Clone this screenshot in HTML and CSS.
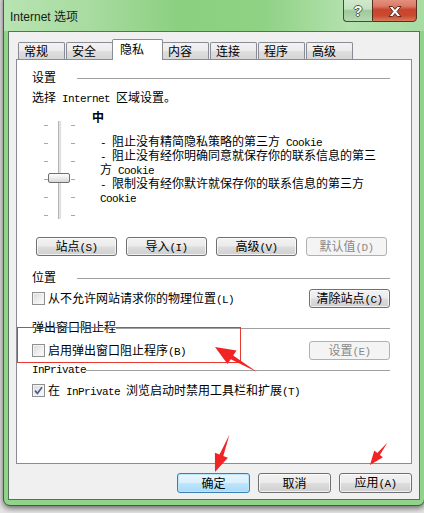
FILE: index.html
```html
<!DOCTYPE html>
<html lang="zh-CN">
<head>
  <meta charset="UTF-8">
  <meta name="viewport" content="width=device-width, initial-scale=1.0">
  <title>Internet 选项</title>
  <link rel="stylesheet" href="styles.css">
</head>
<body>
  <div class="window">
    <div class="titlebar">
      <div class="title">Internet 选项</div>
      <div class="caption-buttons">
        <div class="cap-btn help"><span>?</span></div>
        <div class="cap-btn close">
          <svg width="14" height="11" viewBox="0 0 14 11">
            <path d="M1 0.5H4.5L7 3.4L9.5 0.5H13L9 5.5L13 10.5H9.5L7 7.6L4.5 10.5H1L5 5.5Z" fill="#fff" stroke="#4a2218" stroke-width="0.9" stroke-linejoin="round"/>
          </svg>
        </div>
      </div>
    </div>

    <div class="client">
      <div class="tabs">
        <div class="tab">常规</div>
        <div class="tab">安全</div>
        <div class="tab active">隐私</div>
        <div class="tab">内容</div>
        <div class="tab">连接</div>
        <div class="tab">程序</div>
        <div class="tab">高级</div>
      </div>

      <div class="panel">
        <div class="group-head">
          <span class="group-label">设置</span>
          <span class="group-line"></span>
        </div>
        <div class="zone-text">选择<span class="en"> Internet </span>区域设置。</div>

        <div class="privacy">
          <div class="slider">
            <div class="ticks"><i></i><i></i><i></i><i></i><i></i><i></i></div>
            <div class="track"></div>
            <div class="ticks"><i></i><i></i><i></i><i></i><i></i><i></i></div>
            <div class="thumb"></div>
          </div>
          <div class="level">
            <div class="level-name">中</div>
            <ul class="level-list">
              <li><span class="en">- </span>阻止没有精简隐私策略的第三方<span class="en"> Cookie</span></li>
              <li><span class="en">- </span>阻止没有经你明确同意就保存你的联系信息的第三方<span class="en"> Cookie</span></li>
              <li><span class="en">- </span>限制没有经你默许就保存你的联系信息的第三方<span class="en"> Cookie</span></li>
            </ul>
          </div>
        </div>

        <div class="btn-row">
          <button class="btn">站点<span class="en">(S)</span></button>
          <button class="btn">导入<span class="en">(I)</span></button>
          <button class="btn">高级<span class="en">(V)</span></button>
          <button class="btn" disabled>默认值<span class="en">(D)</span></button>
        </div>

        <div class="group-head location-head">
          <span class="group-label">位置</span>
          <span class="group-line"></span>
        </div>
        <div class="check-row">
          <label class="check-label">
            <span class="check"></span>
            <span class="check-text">从不允许网站请求你的物理位置<span class="en">(L)</span></span>
          </label>
          <button class="btn">清除站点<span class="en">(C)</span></button>
        </div>

        <div class="group-head popup-head">
          <span class="group-label">弹出窗口阻止程</span>
          <span class="group-line"></span>
        </div>
        <div class="check-row popup-row">
          <label class="check-label">
            <span class="check"></span>
            <span class="check-text">启用弹出窗口阻止程序<span class="en">(B)</span></span>
          </label>
          <button class="btn" disabled>设置<span class="en">(E)</span></button>
        </div>

        <div class="group-head inprivate-head">
          <span class="group-label"><span class="en">InPrivate</span></span>
          <span class="group-line"></span>
        </div>
        <div class="check-row inprivate-row">
          <label class="check-label">
            <span class="check">
              <svg width="9" height="9" viewBox="0 0 9 9"><path d="M1 4.6L3.4 7.4L8 1.2" fill="none" stroke="#4a5c98" stroke-width="1.7"/></svg>
            </span>
            <span class="check-text">在<span class="en"> InPrivate </span>浏览启动时禁用工具栏和扩展<span class="en">(T)</span></span>
          </label>
        </div>
      </div>

      <div class="dialog-buttons">
        <button class="btn btn-dialog default">确定</button>
        <button class="btn btn-dialog">取消</button>
        <button class="btn btn-dialog">应用<span class="en">(A)</span></button>
      </div>
    </div>
  </div>

  <!-- screenshot markup drawn over the dialog -->
  <div class="mark-box"></div>
  <svg class="arrows" width="424" height="513" viewBox="0 0 424 513">
    <polygon points="257,372 233.2,355.6 236.5,350.5 215,347 227.5,364 230.8,359.2" />
    <polygon points="229.5,434.5 223.3,455.9 227.9,457.7 215,472 214.9,452.7 219.5,454.5" />
    <polygon points="387.5,442.5 379.9,454.9 382.9,457.3 370,465 374.3,450.5 377.3,452.9" />
  </svg>
</body>
</html>
```

FILE: styles.css
```css
* {
  box-sizing: border-box;
}

body {
  margin: 0;
  width: 424px;
  height: 513px;
  overflow: hidden;
  position: relative;
  background: #e6e6e6;
  font-family: "Noto Sans CJK SC", "Liberation Sans", sans-serif;
  font-size: 12px;
  line-height: 12px;
  color: #000;
}

/* half-width latin, like the old bitmap font: 6px per char */
.en {
  font-family: "Liberation Mono", "DejaVu Sans Mono", monospace;
  font-size: 11px;
  letter-spacing: -0.6px;
}

/* window frame */
.window {
  width: 422px;
  margin: -8px 0 0 3px;
  padding: 0 0 5px;
  border: 1px solid #42603f;
  border-radius: 7px;
  background: #8fd489;
  box-shadow: 0 2px 6px rgba(0, 0, 0, 0.6);
}

.titlebar {
  height: 38px;
  display: flex;
  justify-content: space-between;
  align-items: flex-start;
  padding: 0 7px 0 6px;
  border-radius: 6px 6px 0 0;
  background: linear-gradient(90deg, #b8e3b2 0%, #a6db9e 22%, #8bcf80 42%, #8fd285 62%, #b4e1ae 82%, #a8dca1 100%);
}

.title {
  margin-top: 18px;
  font-family: "Liberation Sans", "Noto Sans CJK SC", sans-serif;
  font-size: 12px;
  line-height: 12px;
  color: #1a1a1a;
}

.caption-buttons {
  display: flex;
}

.cap-btn {
  height: 29px;
  padding-top: 7px;
  display: flex;
  align-items: center;
  justify-content: center;
  border: 1px solid #3c4e3c;
}

.help {
  width: 29px;
  border-right: none;
  border-radius: 0 0 0 4px;
  background: linear-gradient(#d9eed6 0%, #c3e2bf 55%, #9fc89a 62%, #b5d9b0 100%);
}

.help span {
  font-family: "Liberation Sans", sans-serif;
  font-weight: bold;
  font-size: 14px;
  color: #fff;
  text-shadow: 1px 0 #4b5b4b, -1px 0 #4b5b4b, 0 1px #4b5b4b, 0 -1px #4b5b4b;
}

.close {
  width: 45px;
  border-radius: 0 0 4px 0;
  border-color: #5a2c22;
  background: linear-gradient(#e9a898 0%, #dc7a64 45%, #c8452c 58%, #c84a30 80%, #db7a5c 100%);
}

.close svg {
  display: block;
}

/* client area */
.client {
  margin: 0 4px;
  height: 469px;
  border: 1px solid #56705a;
  background: #f0f0f0;
}

.tabs {
  display: flex;
  align-items: flex-end;
  height: 20px;
  margin-top: 7px;
  padding-left: 9px;
}

.tab {
  width: 47px;
  height: 17px;
  margin-right: 1px;
  padding-left: 5px;
  line-height: 15px;
  border: 1px solid #898c95;
  border-bottom: none;
  border-radius: 2px 2px 0 0;
  background: linear-gradient(#f3f3f3 0%, #ebebeb 50%, #dedede 50%, #d6d6d6 100%);
}

.tab.active {
  position: relative;
  z-index: 1;
  width: 51px;
  height: 21px;
  margin: 0 -1px -1px -2px;
  padding-left: 7px;
  line-height: 17px;
  background: #fff;
}

.panel {
  height: 405px;
  margin: 0 7px;
  padding: 11px 21px 0 15px;
  border: 1px solid #898c95;
  background: #fff;
  display: flex;
  flex-direction: column;
}

.group-head {
  display: flex;
  align-items: center;
  height: 12px;
}

.group-label {
  min-width: 45px;
  white-space: nowrap;
}

.group-line {
  flex: 1;
  height: 1px;
  margin-top: 2px;
  background: #a0a0a0;
}

.zone-text {
  margin-top: 8px;
}

/* privacy level */
.privacy {
  display: flex;
  margin-top: 6px;
}

.slider {
  position: relative;
  display: flex;
  justify-content: space-between;
  width: 31px;
  height: 98px;
  margin: 10px 0 0 12px;
}

.ticks {
  display: flex;
  flex-direction: column;
  gap: 17px;
  width: 4px;
  padding-top: 4px;
}

.ticks i {
  display: block;
  height: 1px;
  background: #a8a8a8;
}

.track {
  width: 4px;
  height: 98px;
  border-left: 1px solid #b4b4b4;
  border-right: 1px solid #fafafa;
  background: #e2e2e2;
}

.thumb {
  position: absolute;
  left: 4px;
  top: 52px;
  width: 22px;
  height: 10px;
  border: 1px solid #6f6f6f;
  border-radius: 2px;
  background: linear-gradient(#fdfdfd 0%, #ececec 50%, #d6d6d6 100%);
}

.level {
  margin-left: 17px;
}

.level-name {
  font-weight: bold;
}

.level-list {
  list-style: none;
  margin: 12px 0 0;
  padding: 0 0 0 8px;
  width: 290px;
}

/* buttons */
.btn {
  height: 19px;
  width: 81px;
  padding: 0;
  border: 1px solid #707070;
  border-radius: 3px;
  background: linear-gradient(#f2f2f2 0%, #ebebeb 48%, #dddddd 52%, #cfcfcf 100%);
  box-shadow: inset 0 0 0 1px rgba(255, 255, 255, 0.7);
  font-family: inherit;
  font-size: 12px;
  line-height: 12px;
  color: #000;
}

.btn:disabled {
  border-color: #adb2b5;
  background: #f4f4f4;
  box-shadow: none;
  color: #8a8a8a;
}

.btn-row {
  display: flex;
  gap: 9px;
  margin: 18px 0 0 4px;
}

.location-head {
  margin-top: 15px;
}

.check-row {
  display: flex;
  align-items: center;
  justify-content: space-between;
  height: 19px;
  margin-top: 6px;
}

.check-label {
  display: flex;
  align-items: center;
  white-space: nowrap;
}

.check {
  flex: none;
  width: 13px;
  height: 13px;
  margin-right: 3px;
  display: flex;
  align-items: center;
  justify-content: center;
  border: 1px solid #8e8f8f;
  background: linear-gradient(135deg, #d8d8d8 0%, #f0f0f0 60%, #fdfdfd 100%);
  box-shadow: inset 0 0 0 1px #f4f4f4;
}

.check svg {
  display: block;
}

.popup-head {
  margin-top: 13px;
}

.popup-row {
  margin-top: 8px;
}

.inprivate-head {
  margin-top: 3px;
}

.inprivate-row {
  height: 13px;
  margin-top: 9px;
}

.dialog-buttons {
  display: flex;
  justify-content: flex-end;
  gap: 8px;
  margin-top: 9px;
  padding-right: 7px;
}

.btn-dialog {
  width: 73px;
  height: 20px;
}

.btn.default {
  border-color: #3c7fb1;
  background: linear-gradient(#eaf6fd 0%, #d9f0fc 48%, #bee6fd 52%, #a7d9f5 100%);
  box-shadow: inset 0 0 0 1px #b9e6fb;
}

/* red screenshot annotations */
.mark-box {
  position: absolute;
  left: 17px;
  top: 327px;
  width: 224px;
  height: 36px;
  border: 1px solid #e8392e;
}

.arrows {
  position: absolute;
  left: 0;
  top: 0;
  pointer-events: none;
}

.arrows polygon {
  fill: #f02424;
}
```
